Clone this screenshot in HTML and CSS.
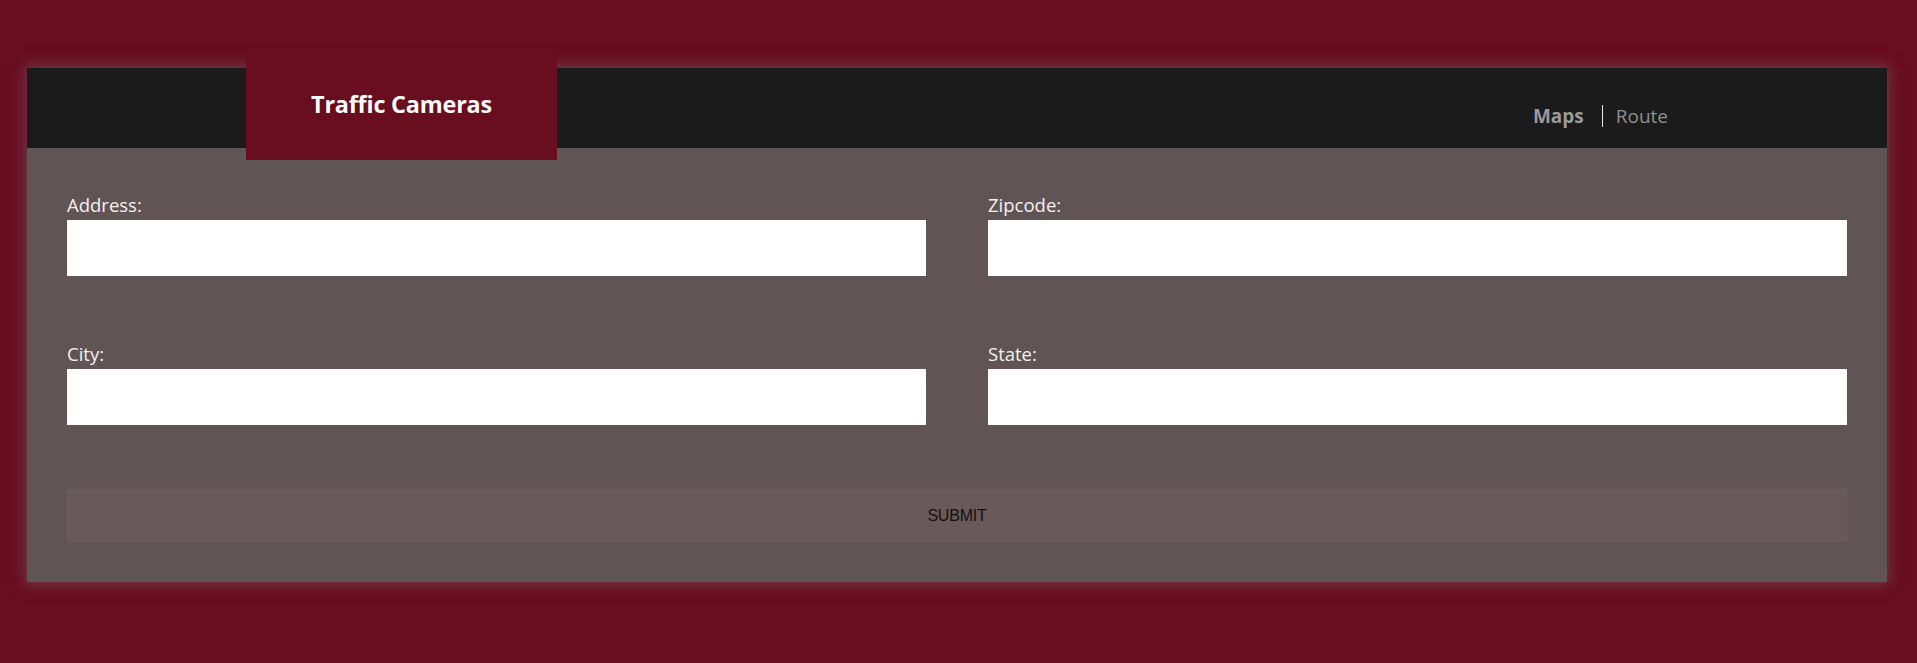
FILE: index.html
```html
<!DOCTYPE html>
<html>
<head>
<meta charset="utf-8">
<link rel="stylesheet" href="styles.css">
</head>
<body>
<div class="panel">
  <header class="topbar">
    <div class="brand">Traffic Cameras</div>
    <nav class="nav">
      <a class="nav-link active">Maps</a>
      <span class="divider"></span>
      <a class="nav-link">Route</a>
    </nav>
  </header>
  <form class="form">
    <div class="field">
      <label class="label">Address:</label>
      <input class="input" type="text">
    </div>
    <div class="field">
      <label class="label">Zipcode:</label>
      <input class="input" type="text">
    </div>
    <div class="field">
      <label class="label">City:</label>
      <input class="input" type="text">
    </div>
    <div class="field">
      <label class="label">State:</label>
      <input class="input" type="text">
    </div>
    <button class="submit" type="button">SUBMIT</button>
  </form>
</div>
</body>
</html>
```
FILE: styles.css
```css
html, body {
  margin: 0;
  padding: 0;
  background: #690d20;
  height: 100%;
}
body {
  padding-top: 68px;
  box-sizing: border-box;
  font-family: "Open Sans", "Noto Sans", sans-serif;
}
.panel {
  margin: 0 30px 0 27px;
  background: #615454;
  box-shadow: 0 0 14px 2px rgba(120, 100, 115, 0.55);
  display: flex;
  flex-direction: column;
}
.topbar {
  height: 80px;
  background: #1b1b1b;
  display: flex;
  justify-content: space-between;
  align-items: stretch;
}
.brand {
  position: relative;
  z-index: 2;
  margin: -20px 0 -12px 219px;
  width: 311px;
  background: #690d20;
  color: #fff;
  font-weight: 700;
  font-size: 23.4px;
  display: flex;
  align-items: center;
  justify-content: center;
  letter-spacing: -0.2px;
}
.nav {
  display: flex;
  align-items: center;
  margin-right: 219px;
  padding-top: 16px;
}
.nav-link {
  font-size: 19px;
  line-height: 27px;
  color: #8e8e8e;
  text-decoration: none;
}
.nav-link.active {
  font-weight: 700;
  color: #9a9a9a;
}
.divider {
  width: 1px;
  height: 22px;
  background: #e8e8e8;
  margin: 0 13px 0 18px;
}
.form {
  padding: 44px 40px 40px;
  display: grid;
  grid-template-columns: 1fr 1fr;
  column-gap: 62px;
  row-gap: 65px;
}
.field {
  display: flex;
  flex-direction: column;
}
.label {
  color: #f4f0f0;
  font-size: 18.5px;
  line-height: 26px;
  margin-bottom: 2px;
}
.input {
  height: 56px;
  border: none;
  margin: 0;
  padding: 0 8px;
  background: #fff;
  box-sizing: border-box;
  width: 100%;
}
.submit {
  grid-column: 1 / span 2;
  height: 53px;
  margin-top: -1px;
  background: #685a5b;
  border: 1px solid #6b5d5e;
  color: #151010;
  font-family: "Liberation Sans", Arial, sans-serif;
  font-size: 16px;
  letter-spacing: -0.2px;
}
```
